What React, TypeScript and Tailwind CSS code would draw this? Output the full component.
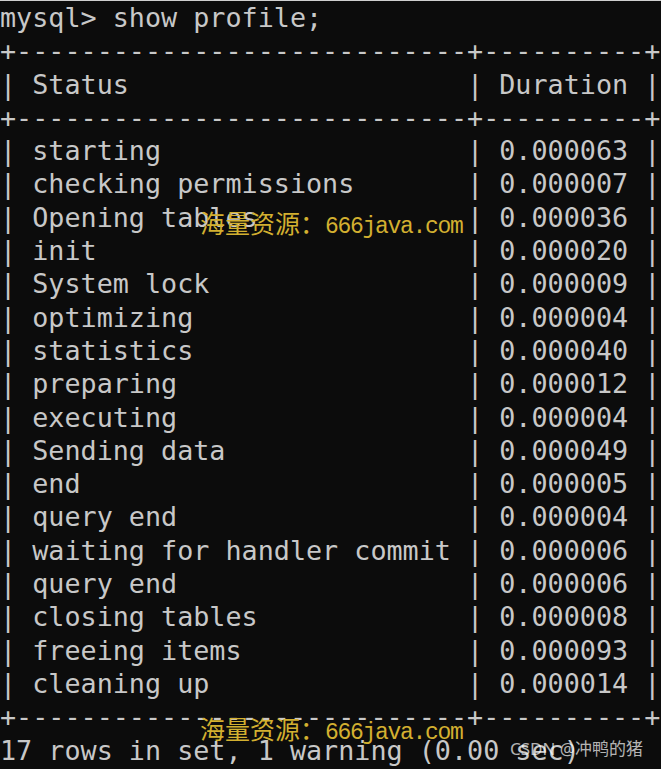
const rows: [string, string][] = [
  ['starting', '0.000063'],
  ['checking permissions', '0.000007'],
  ['Opening tables', '0.000036'],
  ['init', '0.000020'],
  ['System lock', '0.000009'],
  ['optimizing', '0.000004'],
  ['statistics', '0.000040'],
  ['preparing', '0.000012'],
  ['executing', '0.000004'],
  ['Sending data', '0.000049'],
  ['end', '0.000005'],
  ['query end', '0.000004'],
  ['waiting for handler commit', '0.000006'],
  ['query end', '0.000006'],
  ['closing tables', '0.000008'],
  ['freeing items', '0.000093'],
  ['cleaning up', '0.000014'],
];

const border = '+' + '-'.repeat(28) + '+' + '-'.repeat(10) + '+';
const row = (a: string, b: string) => '| ' + a.padEnd(26) + ' | ' + b.padEnd(8) + ' |';

const lines = [
  'mysql> show profile;',
  border,
  row('Status', 'Duration'),
  border,
  ...rows.map(([a, b]) => row(a, b)),
  border,
  '17 rows in set, 1 warning (0.00 sec)',
];

function Watermark({ className }: { className: string }) {
  return (
    <div
      className={`absolute left-[200px] flex items-baseline leading-none whitespace-pre text-[#d3b030] ${className}`}
    >
      <span className="text-[25px] font-['Noto_Sans_CJK_SC',sans-serif]">海量资源：</span>
      <span className="text-[23px] tracking-[-1.3px] font-['Liberation_Mono',monospace]">666java.com</span>
    </div>
  );
}

export default function App() {
  return (
    <div className="relative h-[769px] w-[661px] overflow-hidden border-t border-[#cfcfcf] bg-[#0c0c0c]">
      <div className="font-['DejaVu_Sans_Mono',monospace] text-[26.75px] text-[#c8c8c8]">
        {lines.map((l, i) => (
          <div key={i} className="h-[33.3px] leading-[33.3px] whitespace-pre">
            {l}
          </div>
        ))}
      </div>
      {/* watermarks */}
      <Watermark className="top-[209px]" />
      <Watermark className="top-[715px]" />
      <div className="absolute top-[739px] left-[510px] text-[17px] leading-none whitespace-pre text-white/70 font-['Noto_Sans','Noto_Sans_CJK_SC',sans-serif]">
        CSDN @冲鸭的猪
      </div>
    </div>
  );
}
